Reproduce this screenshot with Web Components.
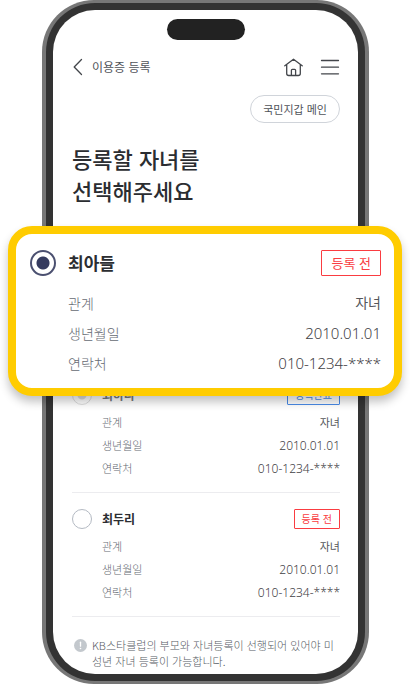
<!DOCTYPE html>
<html lang="ko">
<head>
<meta charset="utf-8">
<meta name="viewport" content="width=device-width, initial-scale=1">
<title>이용증 등록</title>
<style>
  body { margin: 0; background: #fff; color: #33363c; font-family: "Noto Sans CJK KR", sans-serif; overflow-x: hidden; }
</style>
</head>
<body>
<phone-frame>
  <app-header title="이용증 등록"></app-header>
  <pill-button>국민지갑 메인</pill-button>
  <page-title>등록할 자녀를<br>선택해주세요</page-title>
  <child-list>
    <spotlight-card>
      <child-item featured checked name="최아들" status="등록 전" relation="자녀" birth="2010.01.01" phone="010-1234-****"></child-item>
    </spotlight-card>
    <child-item disabled name="최하나" status="등록완료" relation="자녀" birth="2010.01.01" phone="010-1234-****"></child-item>
    <child-item name="최두리" status="등록 전" relation="자녀" birth="2010.01.01" phone="010-1234-****"></child-item>
  </child-list>
  <info-note>KB스타클럽의 부모와 자녀등록이 선행되어 있어야 미성년 자녀 등록이 가능합니다.</info-note>
</phone-frame>

<script>
const define = (name, html, setup) => {
  const template = document.createElement('template');
  template.innerHTML = html;
  customElements.define(name, class extends HTMLElement {
    constructor() {
      super();
      this.attachShadow({ mode: 'open' }).append(template.content.cloneNode(true));
    }
    connectedCallback() { if (setup) setup(this, this.shadowRoot); }
  });
};

define('phone-frame', `
<style>
  :host { box-sizing: border-box; min-height: 100vh; margin: 0 41px 0 42px; padding: 3px 4px; border-radius: 52px; background: #777; display: flex; }
  .bezel { flex: 1; min-width: 0; display: flex; padding: 7px; border-radius: 49px; background: #333; }
  .screen { flex: 1; min-width: 0; display: flex; flex-direction: column; padding: 9px 18px 0 19px; border-radius: 42px; background: #fff; }
  .island { align-self: center; width: 78px; height: 21px; border-radius: 11px; background: #222; }
</style>
<div class="bezel"><div class="screen"><div class="island"></div><slot></slot></div></div>`);

define('app-header', `
<style>
  :host { display: block; margin-top: 15px; }
  header { display: flex; align-items: center; height: 24px; }
  button { display: flex; padding: 0; border: 0; background: none; color: #43464b; }
  h1 { flex: 1; margin: 0 0 0 8px; font-size: 12px; line-height: 24px; font-weight: 400; color: #505359; }
  .menu { margin-left: 16px; }
  svg { fill: none; stroke: currentColor; stroke-width: 1.3; stroke-linecap: round; stroke-linejoin: round; }
</style>
<header>
  <button type="button" aria-label="뒤로"><svg width="12" height="20" viewBox="0 0 12 20"><path d="M9.5 2.5 2.2 10l7.3 7.5"/></svg></button>
  <h1></h1>
  <button type="button" aria-label="홈"><svg width="20" height="20" viewBox="0 0 20 20"><path d="M.8 8.8 9.5 2.2l8.7 6.6M2.7 7.6v8.9q0 2 2 2h9.6q2 0 2-2V7.6M7.4 18.2v-4.9q0-.9.9-.9h2.4q.9 0 .9.9v4.9"/></svg></button>
  <button class="menu" type="button" aria-label="메뉴"><svg width="20" height="20" viewBox="0 0 20 20"><path d="M1.5 3.5h17M1.5 10.2h17M1.5 16.8h17"/></svg></button>
</header>`, (el, root) => { root.querySelector('h1').textContent = el.getAttribute('title'); });

define('pill-button', `
<style>
  :host { display: block; align-self: flex-end; margin-top: 16px; }
  button { display: block; height: 28px; padding: 0 12px; border: 1px solid #d0d4da; border-radius: 14px; background: #fff; color: #505359; font: 400 11px/24px "Noto Sans CJK KR", sans-serif; }
</style>
<button type="button"><slot></slot></button>`);

define('page-title', `
<style>
  :host { display: block; margin-top: 19px; }
  h2 { margin: 0; font-size: 22px; line-height: 32px; font-weight: 500; color: #2b2d31; }
</style>
<h2><slot></slot></h2>`);

define('child-list', `
<style>
  :host { display: block; position: relative; margin-top: 38px; }
</style>
<slot></slot>`);

/* Enlarged card that floats above the list and reaches past the phone's edges. */
define('spotlight-card', `
<style>
  :host { display: block; height: 125px; }
  .card { position: absolute; z-index: 1; top: -18px; left: -64px; right: -62px; padding: 16px 13px 10px 14px; border: 8px solid #ffcc00; border-radius: 24px; background: #fff; box-shadow: 0 6px 10px rgba(0,0,0,.24); }
</style>
<div class="card"><slot></slot></div>`);

define('child-item', `
<style>
  :host { display: block; padding: 16px 0 12px; border-bottom: 1px solid #ececef;
    --radio: 20px; --gap: 10px; --name: 12px; --badge: 10px; --badge-h: 18px; --badge-pad: 7px;
    --label: 11px; --value: 12px; --row: 23px; --rows-top: 6px; }
  :host([featured]) { padding: 0; border: 0;
    --radio: 26px; --gap: 12px; --name: 17px; --badge: 13px; --badge-h: 24px; --badge-pad: 9px;
    --label: 14px; --value: 15px; --row: 30px; --rows-top: 12px; }
  .top { display: flex; align-items: center; justify-content: space-between; }
  label { display: flex; align-items: center; gap: var(--gap); font-size: var(--name); line-height: var(--radio); font-weight: 700; color: #2b2d31; }
  input { appearance: none; box-sizing: border-box; width: var(--radio); height: var(--radio); margin: 0; border: 1px solid #b4bac3; border-radius: 50%; background: #fff; }
  input:checked { border: 2px solid #4b5070; background: radial-gradient(circle, #353b5f 6px, #fff 7px); }
  input:disabled { border-color: #ddd; background: radial-gradient(circle, #ddd 4px, #fff 5px); }
  .badge { padding: 0 var(--badge-pad); border: 1px solid currentColor; border-radius: 1px; color: #fa3c41; background: #fff; font-size: var(--badge); line-height: var(--badge-h); }
  :host([disabled]) .badge { color: #4a8be8; }
  :host([disabled]) label { color: #777a80; }
  dl { margin: var(--rows-top) 0 0; padding-left: calc(var(--radio) + var(--gap)); }
  .row { display: flex; justify-content: space-between; line-height: var(--row); }
  dt { font-size: var(--label); font-weight: 300; color: #666b73; }
  dd { margin: 0; font-size: var(--value); font-weight: 300; color: #3f4145; font-family: "Noto Sans", "Noto Sans CJK KR", sans-serif; }
  dd.relation { font-size: var(--label); font-weight: 400; color: #55575b; }
</style>
<div class="top"><label><input type="radio"><span class="name"></span></label><span class="badge"></span></div>
<dl>
  <div class="row"><dt>관계</dt><dd class="relation"></dd></div>
  <div class="row"><dt>생년월일</dt><dd class="birth"></dd></div>
  <div class="row"><dt>연락처</dt><dd class="phone"></dd></div>
</dl>`, (el, root) => {
  const put = (cls, attr) => { root.querySelector(cls).textContent = el.getAttribute(attr); };
  put('.name', 'name'); put('.badge', 'status'); put('.relation', 'relation'); put('.birth', 'birth'); put('.phone', 'phone');
  const input = root.querySelector('input');
  input.checked = el.hasAttribute('checked');
  input.disabled = el.hasAttribute('disabled');
});

define('info-note', `
<style>
  :host { display: flex; gap: 5px; padding: 20px 6px 3px 2px; font-size: 11px; line-height: 16px; font-weight: 300; color: #565b63; }
  svg { flex: none; width: 13px; height: 13px; margin-top: 2px; }
  p { margin: 0; }
</style>
<svg viewBox="0 0 13 13" aria-hidden="true"><circle cx="6.5" cy="6.5" r="6.5" fill="#c3c8cd"/><path d="M6.5 3.2v4" stroke="#fff" stroke-width="1.3" stroke-linecap="round"/><circle cx="6.5" cy="9.5" r=".8" fill="#fff"/></svg>
<p><slot></slot></p>`);
</script>
</body>
</html>
